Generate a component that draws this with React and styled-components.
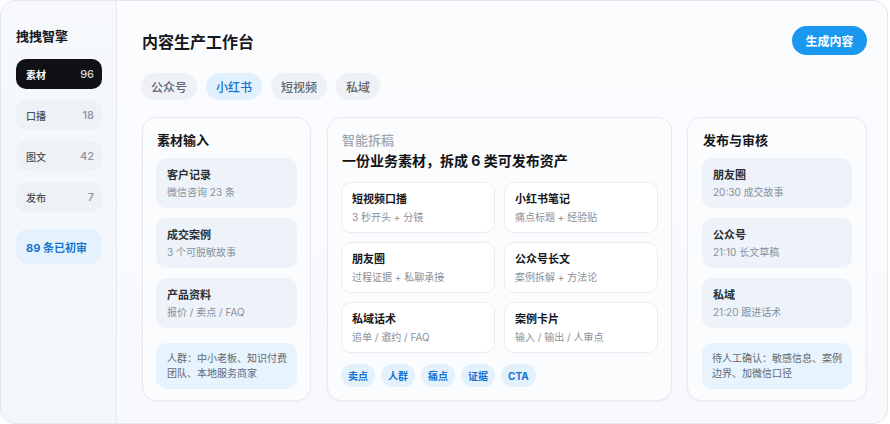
import React from 'react'
import styled, { createGlobalStyle } from 'styled-components'

const GlobalStyle = createGlobalStyle`
  html, body { margin: 0; padding: 0; background: #ffffff; }
  body { font-family: Inter, "Noto Sans CJK SC", "Noto Sans", sans-serif; color: #15171c; }
  * { box-sizing: border-box; }
`

const Frame = styled.div`
  width: 888px;
  height: 424px;
  display: flex;
  border: 1px solid #e4e8ee;
  border-radius: 14px;
  overflow: hidden;
  background: linear-gradient(180deg, #fbfcfe 0%, #f7f9fc 100%);
`

const Sidebar = styled.aside`
  width: 116px;
  flex-shrink: 0;
  border-right: 1px solid #e6eaf0;
  background: linear-gradient(180deg, #f6f8fb 0%, #f3f7fb 100%);
  padding: 26px 14px 0 15px;
  display: flex;
  flex-direction: column;
  gap: 11px;
`

const Brand = styled.div`
  font-size: 13px;
  line-height: 18px;
  font-weight: 700;
  margin-bottom: 3px;
`

const NavItem = styled.div`
  height: 30px;
  border-radius: 10px;
  display: flex;
  align-items: center;
  justify-content: space-between;
  padding: 0 8px 0 10px;
  background: ${p => (p.$active ? '#0f1115' : '#eef2f7')};
  span:first-child {
    font-size: 10px;
    font-weight: ${p => (p.$active ? 700 : 500)};
    color: ${p => (p.$active ? '#ffffff' : '#4a4f58')};
  }
  span:last-child {
    font-size: 11px;
    font-weight: 500;
    color: ${p => (p.$active ? '#d8dce2' : '#8c929b')};
  }
`

const Review = styled.div`
  margin-top: 6px;
  height: 35px;
  border-radius: 12px;
  background: #e5f2fd;
  color: #1672cf;
  font-size: 11px;
  font-weight: 700;
  display: flex;
  align-items: center;
  padding-left: 10px;
`

const Main = styled.main`
  flex: 1;
  padding: 24px 21px 0 24px;
  display: flex;
  flex-direction: column;
`

const Header = styled.div`
  height: 30px;
  display: flex;
  align-items: center;
  justify-content: space-between;
`

const Title = styled.h1`
  margin: 0 0 0 1px;
  font-size: 16px;
  font-weight: 600;
  color: #15171c;
  padding-top: 1px;
`

const PrimaryButton = styled.button`
  height: 29px;
  width: 75px;
  border: none;
  border-radius: 15px;
  background: #1a97ef;
  color: #ffffff;
  font-family: inherit;
  font-size: 12px;
  font-weight: 700;
  padding: 0;
`

const Tabs = styled.div`
  display: flex;
  gap: 9px;
  margin-top: 18px;
`

const Tab = styled.div`
  height: 27px;
  padding: 0 10px;
  border-radius: 14px;
  display: flex;
  align-items: center;
  font-size: 12px;
  font-weight: 500;
  background: ${p => (p.$active ? '#e0f0fd' : '#eef1f5')};
  color: ${p => (p.$active ? '#1672cf' : '#5f6672')};
`

const Columns = styled.div`
  margin-top: 17px;
  margin-left: 1px;
  display: grid;
  grid-template-columns: 169px 345px 179px;
  column-gap: 16px;
  height: 284px;
  & > :last-child { margin-left: -1px; }
`

const Card = styled.section`
  border: 1px solid #e6eaf0;
  border-radius: 14px;
  background: #fbfcfe;
  box-shadow: 0 1px 3px rgba(20, 40, 80, 0.03);
  padding: 13px ${p => p.$pad || 13}px 0;
  display: flex;
  flex-direction: column;
`

const CardTitle = styled.h2`
  margin: 0 0 9px 1px;
  font-size: 13px;
  line-height: 18px;
  color: ${p => (p.$muted ? '#a0a6b0' : '#15171c')};
  font-weight: ${p => (p.$muted ? 500 : 700)};
`

const Stack = styled.div`
  display: flex;
  flex-direction: column;
  gap: 10px;
`

const Item = styled.div`
  height: 50px;
  border-radius: 10px;
  background: #edf3f9;
  padding: 9px 10px 0 11px;
`

const ItemTitle = styled.div`
  font-size: 11px;
  line-height: 16px;
  font-weight: 600;
  color: #2a2e35;
`

const ItemSub = styled.div`
  margin-top: 2px;
  font-size: 10px;
  line-height: 14px;
  color: #8a9099;
`

const Note = styled.div`
  margin-top: 5px;
  border-radius: 11px;
  background: #e7f3fd;
  padding: 8px 6px 8px ${p => p.$left || 11}px;
  font-size: 10px;
  line-height: 15px;
  color: #626873;
`

const Lead = styled.div`
  margin: -7px 0 11px 1px;
  font-size: 14px;
  line-height: 20px;
  font-weight: 700;
  color: #111317;
`

const AssetGrid = styled.div`
  display: grid;
  grid-template-columns: 1fr 1fr;
  gap: 9px;
`

const Asset = styled.div`
  height: 51px;
  border-radius: 10px;
  border: 1px solid #e8ecf1;
  background: #ffffff;
  padding: 8px 10px 0 10px;
`

const AssetTitle = styled.div`
  font-size: 11px;
  line-height: 16px;
  font-weight: 700;
  color: #15171c;
`

const AssetSub = styled.div`
  margin-top: 3px;
  font-size: 10px;
  line-height: 14px;
  color: #8a9099;
`

const TagRow = styled.div`
  display: flex;
  gap: 6px;
  margin-top: 11px;
`

const Tag = styled.div`
  height: 23px;
  padding: 0 7px;
  border-radius: 12px;
  background: #e3f1fd;
  color: #1672cf;
  font-size: 10px;
  font-weight: 700;
  display: flex;
  align-items: center;
`

const nav = [
  ['素材', 96, true],
  ['口播', 18],
  ['图文', 42],
  ['发布', 7],
]

const inputs = [
  ['客户记录', '微信咨询 23 条'],
  ['成交案例', '3 个可脱敏故事'],
  ['产品资料', '报价 / 卖点 / FAQ'],
]

const assets = [
  ['短视频口播', '3 秒开头 + 分镜'],
  ['小红书笔记', '痛点标题 + 经验贴'],
  ['朋友圈', '过程证据 + 私聊承接'],
  ['公众号长文', '案例拆解 + 方法论'],
  ['私域话术', '追单 / 邀约 / FAQ'],
  ['案例卡片', '输入 / 输出 / 人审点'],
]

const publish = [
  ['朋友圈', '20:30 成交故事'],
  ['公众号', '21:10 长文草稿'],
  ['私域', '21:20 跟进话术'],
]

export default function App() {
  return (
    <>
      <GlobalStyle />
      <Frame>
        <Sidebar>
          <Brand>拽拽智擎</Brand>
          {nav.map(([label, count, active]) => (
            <NavItem key={label} $active={active}>
              <span>{label}</span>
              <span>{count}</span>
            </NavItem>
          ))}
          <Review>89 条已初审</Review>
        </Sidebar>
        <Main>
          <Header>
            <Title>内容生产工作台</Title>
            <PrimaryButton>生成内容</PrimaryButton>
          </Header>
          <Tabs>
            <Tab>公众号</Tab>
            <Tab $active>小红书</Tab>
            <Tab>短视频</Tab>
            <Tab>私域</Tab>
          </Tabs>
          <Columns>
            <Card>
              <CardTitle>素材输入</CardTitle>
              <Stack>
                {inputs.map(([t, s]) => (
                  <Item key={t}>
                    <ItemTitle>{t}</ItemTitle>
                    <ItemSub>{s}</ItemSub>
                  </Item>
                ))}
                <Note>人群：中小老板、知识付费<br />团队、本地服务商家</Note>
              </Stack>
            </Card>
            <Card>
              <CardTitle $muted>智能拆稿</CardTitle>
              <Lead>一份业务素材，拆成 6 类可发布资产</Lead>
              <AssetGrid>
                {assets.map(([t, s]) => (
                  <Asset key={t}>
                    <AssetTitle>{t}</AssetTitle>
                    <AssetSub>{s}</AssetSub>
                  </Asset>
                ))}
              </AssetGrid>
              <TagRow>
                {['卖点', '人群', '痛点', '证据', 'CTA'].map(t => (
                  <Tag key={t}>{t}</Tag>
                ))}
              </TagRow>
            </Card>
            <Card $pad={14}>
              <CardTitle>发布与审核</CardTitle>
              <Stack>
                {publish.map(([t, s]) => (
                  <Item key={t}>
                    <ItemTitle>{t}</ItemTitle>
                    <ItemSub>{s}</ItemSub>
                  </Item>
                ))}
                <Note $left={10}>待人工确认：敏感信息、案例<br />边界、加微信口径</Note>
              </Stack>
            </Card>
          </Columns>
        </Main>
      </Frame>
    </>
  )
}
